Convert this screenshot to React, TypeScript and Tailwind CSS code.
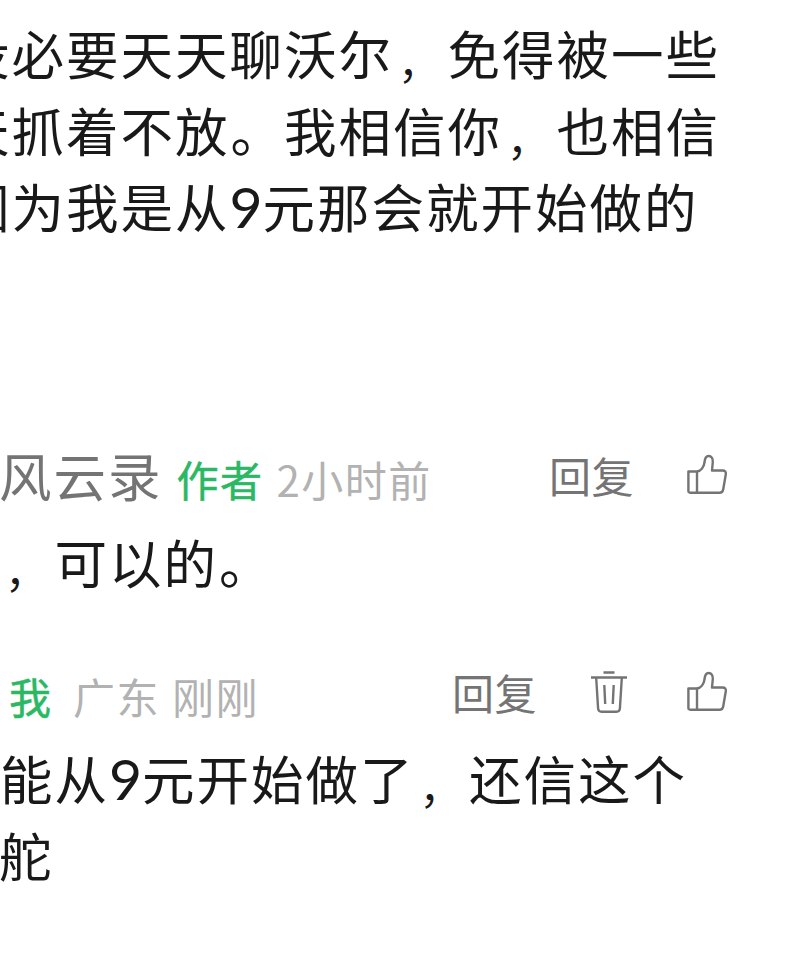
import type { ReactNode } from "react";

function ThumbIcon() {
  return (
    <svg className="block h-[42px] w-[42px]" viewBox="0 0 42 42" fill="none" stroke="#747474" strokeWidth="2.4" strokeLinejoin="round">
      <path d="M2.400 17.500h8.500c4-.5 7-4.500 7.700-9.500.3-3.500 1.400-6 4-6 2.800 0 4.400 2.500 4.200 6l-.8 8.500h10.500c2.600 0 3.700 1.500 3.300 3.800l-2.600 15.200c-.4 2.100-1.500 3.200-3.700 3.200H4.200c-1.200 0-1.800-.6-1.800-1.800z" />
      <path d="M11 17.500v21.200" />
    </svg>
  );
}

function TrashIcon() {
  return (
    <svg className="block h-[44px] w-[38px]" viewBox="0 0 38 44" fill="none" stroke="#747474" strokeWidth="2.4">
      <path d="M13.500 2.500h11M1 7.500h36M6.200 8l1.900 30.500c.2 2.300 1.300 3.300 3.500 3.300h14.800c2.200 0 3.300-1 3.500-3.300L31.800 8M14.300 15l.9 19M23.700 15l-.9 19" />
    </svg>
  );
}

function Line({ children, className = "" }: { children: ReactNode; className?: string }) {
  return (
    <p className={`h-[76.5px] whitespace-nowrap text-[52.5px] leading-[76.5px] tracking-[2px] text-[#191919] ${className}`}>
      {children}
    </p>
  );
}

function Nine() {
  return <span className="inline-block w-[33px] font-['Lato'] text-[57px] leading-none tracking-normal">9</span>;
}

function Comma() {
  return <span className="inline-block w-[54.5px] pl-[5px] align-[-4px] text-[42px] leading-none tracking-normal">，</span>;
}

function Stop() {
  return <span className="inline-block w-[54.5px] pl-px leading-none tracking-normal">。</span>;
}

function Reply() {
  return <button className="-mt-[3px] text-[42px] leading-[60px] tracking-[0.500px] text-[#747474]">回复</button>;
}

export default function App() {
  return (
    <main className="h-[959px] w-[797px] overflow-hidden bg-white font-['Noto_Sans_CJK_SC',sans-serif]">
      <section className="-ml-[43px] h-[446px] pt-[14px]">
        <Line>没必要天天聊沃尔<Comma />免得被一些</Line>
        <Line>天抓着不放<Stop />我相信你<Comma />也相信</Line>
        <Line>因为我是从<Nine />元那会就开始做的</Line>
      </section>

      <section className="h-[216px]">
        <header className="flex h-[60px] items-center whitespace-nowrap pr-[69px]">
          <span className="-ml-px -mt-[5px] text-[52.5px] leading-[60px] tracking-[2px] text-[#747474]">风云录</span>
          <span className="ml-[14px] pt-[5px] text-[42px] leading-[60px] tracking-[1.500px] text-[#2ab864] [-webkit-text-stroke:0.5px_#2ab864]">作者</span>
          <span className="ml-[13px] pt-[5px] text-[42px] leading-[60px] tracking-[1.500px] text-[#b2b2b2]">2小时前</span>
          <div className="ml-auto flex items-center">
            <Reply />
            <div className="-mt-[2px] ml-[52px]"><ThumbIcon /></div>
          </div>
        </header>
        <Line className="mt-[17px]"><Comma />可以的<Stop /></Line>
      </section>

      <section>
        <header className="flex h-[62px] items-center whitespace-nowrap pr-[69px]">
          <span className="ml-[9px] pt-[5px] text-[42px] leading-[60px] text-[#2ab864] [-webkit-text-stroke:0.5px_#2ab864]">我</span>
          <span className="ml-[22px] pt-[5px] text-[42px] leading-[60px] tracking-[1.500px] text-[#b2b2b2]">广东</span>
          <span className="ml-[12px] pt-[5px] text-[42px] leading-[60px] tracking-[1.500px] text-[#b2b2b2]">刚刚</span>
          <div className="ml-auto flex items-center">
            <Reply />
            <div className="-mt-[2px] ml-[53px]"><TrashIcon /></div>
            <div className="-mt-[2px] ml-[58px]"><ThumbIcon /></div>
          </div>
        </header>
        <Line className="mt-[15px]">能从<Nine />元开始做了<Comma />还信这个</Line>
        <Line className="-ml-px">舵</Line>
      </section>
    </main>
  );
}
